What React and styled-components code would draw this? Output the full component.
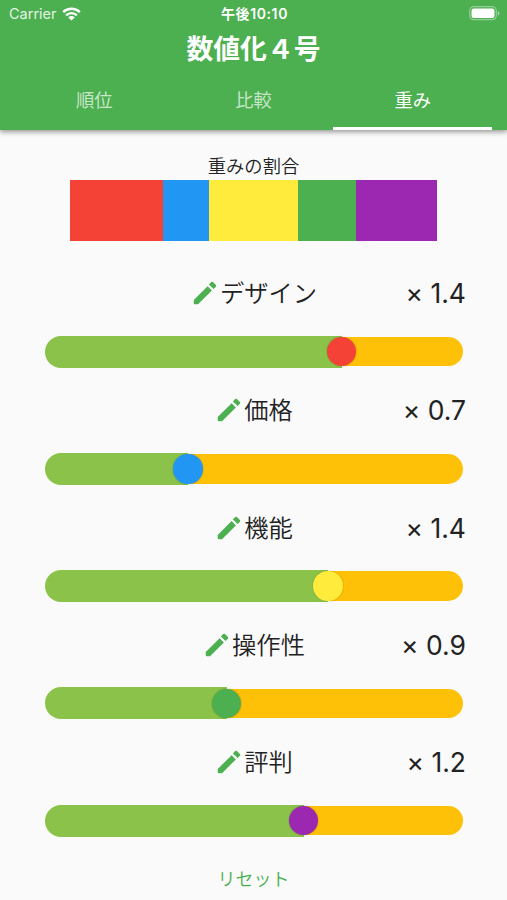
import React from 'react';
import styled, { createGlobalStyle } from 'styled-components';

const GlobalStyle = createGlobalStyle`
  * {
    box-sizing: border-box;
  }

  body {
    margin: 0;
    background-color: #fafafa;
    font-family: Inter, 'Noto Sans CJK JP', sans-serif;
    font-feature-settings: 'calt' 0;
  }
`;

const StyledScreen = styled.div`
  width: 507px;
  height: 900px;
  overflow: hidden;
  background-color: #fafafa;
  color: #222;
`;

const StyledHeader = styled.header`
  display: flex;
  flex-direction: column;
  height: 130px;
  background-color: #4caf50;
  color: #fff;
  box-shadow: 0 2px 5px rgba(0, 0, 0, 0.4);
`;

const StyledStatusBar = styled.div`
  display: grid;
  grid-template-columns: 1fr auto 1fr;
  align-items: center;
  height: 27px;
  padding: 0 7px 0 9px;
  font-size: 14.5px;
`;

const StyledCarrier = styled.div`
  display: flex;
  align-items: center;
  gap: 5px;
  color: #e3f3e4;
`;

const StyledTime = styled.div`
  margin-top: -2px;
  font-size: 14px;
  font-weight: 600;
  letter-spacing: 0.6px;
`;

const StyledBattery = styled.svg`
  justify-self: end;
`;

const StyledTitle = styled.h1`
  margin: 0;
  height: 44px;
  font-size: 26.8px;
  font-weight: 700;
  line-height: 45px;
  text-align: center;
`;

const StyledTabs = styled.nav`
  display: flex;
  flex: 1;
  padding: 0 14.5px;
`;

const StyledTab = styled.button`
  flex: 1;
  padding: 0;
  border: 0;
  border-bottom: 3px solid ${(props) => (props.$active ? '#fff' : 'transparent')};
  background: transparent;
  color: ${(props) => (props.$active ? '#fff' : 'rgba(255, 255, 255, 0.7)')};
  font-family: inherit;
  font-size: 18.3px;
`;

const StyledRatio = styled.section`
  padding-top: 23px;
  height: 112px;
`;

const StyledRatioLabel = styled.div`
  height: 27.4px;
  font-size: 18.3px;
  font-weight: 350;
  line-height: 27px;
  text-align: center;
`;

const StyledRatioBar = styled.div`
  display: flex;
  width: 367px;
  height: 61px;
  margin: 0 auto;
`;

const StyledRatioPart = styled.div`
  background-color: ${(props) => props.$color};
`;

const StyledItem = styled.section`
  height: 117.25px;
  padding: 31px 44px 0 45px;
`;

const StyledItemHead = styled.div`
  display: grid;
  grid-template-columns: 1fr auto 1fr;
  align-items: center;
  height: 40px;
  margin: 0 -3px 0 -4px;
`;

const StyledName = styled.div`
  display: flex;
  grid-column: 2;
  align-items: center;
  font-size: 24.3px;
  font-weight: 350;
  line-height: 40px;
`;

const StyledPencil = styled.svg`
  width: 30px;
  height: 30px;
  fill: #4caf50;
`;

const StyledValue = styled.div`
  font-size: 26.5px;
  line-height: 40px;
  text-align: right;
`;

const StyledSlider = styled.div`
  display: flex;
  align-items: center;
  height: 32px;
  margin-top: 22.5px;
`;

const StyledFilled = styled.div`
  flex: none;
  height: 32px;
  border-radius: 16px 0 0 16px;
  background-color: #8bc34a;
`;

const StyledRest = styled.div`
  flex: 1;
  height: 29.5px;
  border-radius: 0 15px 15px 0;
  background-color: #ffc107;
`;

const StyledThumb = styled.div`
  flex: none;
  width: 29.5px;
  height: 29.5px;
  margin: 0 -14.75px;
  border-radius: 50%;
  background-color: ${(props) => props.$color};
  box-shadow: 0 0 2px rgba(0, 0, 0, 0.25);
  z-index: 1;
`;

const StyledReset = styled.button`
  display: block;
  margin: 38px auto 0;
  padding: 0;
  border: 0;
  background: transparent;
  color: #4caf50;
  font-family: inherit;
  font-size: 18px;
  font-weight: 350;
  line-height: 28px;
`;

const tabs = ['順位', '比較', '重み'];

const items = [
  { name: 'デザイン', value: '1.4', position: 296.5, share: 93, color: '#f44336' },
  { name: '価格', value: '0.7', position: 143, share: 46, color: '#2196f3' },
  { name: '機能', value: '1.4', position: 283, share: 89, color: '#ffeb3b' },
  { name: '操作性', value: '0.9', position: 181.5, share: 58, color: '#4caf50' },
  { name: '評判', value: '1.2', position: 258.5, share: 81, color: '#9c27b0' },
];

function StatusBar() {
  return (
    <StyledStatusBar>
      <StyledCarrier>
        Carrier
        <svg width="19" height="14" viewBox="0 0 19 14" fill="none" stroke="#fff" strokeWidth="2.4">
          <path d="M1.2 5.1a11.8 11.8 0 0 1 16.6 0" />
          <path d="M4.1 8.3a7.7 7.7 0 0 1 10.8 0" />
          <path d="M9.5 13.6L6.3 10.4a4.6 4.6 0 0 1 6.4 0z" fill="#fff" stroke="none" />
        </svg>
      </StyledCarrier>
      <StyledTime>午後10:10</StyledTime>
      <StyledBattery width="31" height="15" viewBox="0 0 31 15">
        <rect x="0.7" y="0.7" width="26.6" height="13" rx="4" fill="none" stroke="#fff" strokeOpacity="0.4" strokeWidth="1.2" />
        <rect x="2.5" y="2.5" width="23" height="9.4" rx="2.2" fill="#fff" />
        <path d="M28.8 5v4.6c1-.4 1.6-1.2 1.6-2.3S29.8 5.4 28.8 5z" fill="#fff" fillOpacity="0.5" />
      </StyledBattery>
    </StyledStatusBar>
  );
}

function WeightItem({ item }) {
  return (
    <StyledItem>
      <StyledItemHead>
        <StyledName>
          <StyledPencil viewBox="0 0 24 24">
            <path d="M3 17.6V20q0 1 1 1h2.4L17.5 9.9l-3.4-3.4L3 17.6zM20.71 7.04a1 1 0 0 0 0-1.41l-2.34-2.34a1 1 0 0 0-1.41 0l-1.83 1.83 3.75 3.75 1.83-1.83z" />
          </StyledPencil>
          {item.name}
        </StyledName>
        <StyledValue>× {item.value}</StyledValue>
      </StyledItemHead>
      <StyledSlider>
        <StyledFilled style={{ width: item.position }} />
        <StyledThumb $color={item.color} />
        <StyledRest />
      </StyledSlider>
    </StyledItem>
  );
}

function App() {
  const [active, setActive] = React.useState('重み');

  return (
    <StyledScreen>
      <GlobalStyle />
      <StyledHeader>
        <StatusBar />
        <StyledTitle>数値化４号</StyledTitle>
        <StyledTabs>
          {tabs.map((tab) => (
            <StyledTab key={tab} $active={tab === active} onClick={() => setActive(tab)}>
              {tab}
            </StyledTab>
          ))}
        </StyledTabs>
      </StyledHeader>
      <StyledRatio>
        <StyledRatioLabel>重みの割合</StyledRatioLabel>
        <StyledRatioBar>
          {items.map((item) => (
            <StyledRatioPart key={item.name} $color={item.color} style={{ flexGrow: item.share }} />
          ))}
        </StyledRatioBar>
      </StyledRatio>
      {items.map((item) => (
        <WeightItem key={item.name} item={item} />
      ))}
      <StyledReset>リセット</StyledReset>
    </StyledScreen>
  );
}

export default App;
